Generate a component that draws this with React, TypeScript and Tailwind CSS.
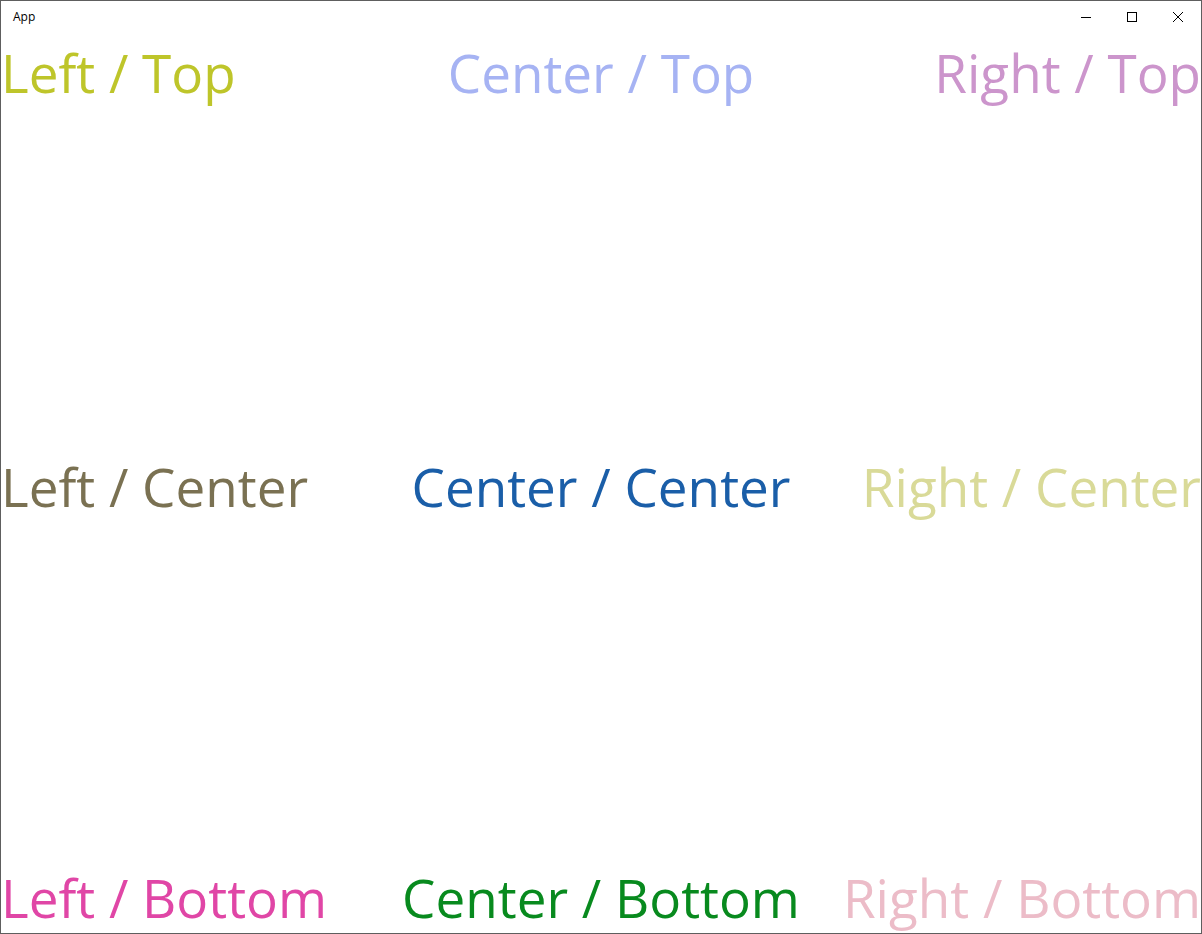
import React from 'react';

interface Cell {
  label: string;
  color: string;
  place: string;
}

const cells: Cell[] = [
  { label: 'Left / Top', color: 'text-[#bec52a]', place: 'justify-self-start self-start' },
  { label: 'Center / Top', color: 'text-[#a6b3f3]', place: 'justify-self-center self-start' },
  { label: 'Right / Top', color: 'text-[#cc95cc]', place: 'justify-self-end self-start' },
  { label: 'Left / Center', color: 'text-[#7a7152]', place: 'justify-self-start self-center mt-[7px]' },
  { label: 'Center / Center', color: 'text-[#1a5ea8]', place: 'justify-self-center self-center mt-[7px]' },
  { label: 'Right / Center', color: 'text-[#d9da98]', place: 'justify-self-end self-center mt-[7px]' },
  { label: 'Left / Bottom', color: 'text-[#e046a6]', place: 'justify-self-start self-end mb-[-4px]' },
  { label: 'Center / Bottom', color: 'text-[#088a1e]', place: 'justify-self-center self-end mb-[-4px]' },
  { label: 'Right / Bottom', color: 'text-[#ecbcc8]', place: 'justify-self-end self-end mb-[-4px]' },
];

function TitleBar() {
  return (
    <div className="flex h-8 items-center justify-between bg-white">
      <span className="pl-3 text-xs text-black">App</span>
      <div className="flex h-full">
        <button className="flex h-full w-[46px] items-center justify-center">
          <svg width="10" height="10" viewBox="0 0 10 10">
            <path d="M0 5.5h10" stroke="#000" strokeWidth="1" />
          </svg>
        </button>
        <button className="flex h-full w-[46px] items-center justify-center">
          <svg width="10" height="10" viewBox="0 0 10 10">
            <rect x="0.5" y="0.5" width="9" height="9" fill="none" stroke="#000" strokeWidth="1" />
          </svg>
        </button>
        <button className="flex h-full w-[46px] items-center justify-center">
          <svg width="10" height="10" viewBox="0 0 10 10">
            <path d="M0 0L10 10M10 0L0 10" stroke="#000" strokeWidth="1" />
          </svg>
        </button>
      </div>
    </div>
  );
}

export default function App() {
  return (
    <div className="flex h-[934px] w-[1202px] flex-col overflow-hidden border border-[#5e5e5e] bg-white font-['Open_Sans','Noto_Sans',sans-serif]">
      <TitleBar />
      <div className="grid flex-1 grid-cols-3 grid-rows-3 overflow-hidden">
        {cells.map((cell) => (
          <div
            key={cell.label}
            className={`whitespace-nowrap text-[53px] leading-[79px] ${cell.color} ${cell.place}`}
          >
            {cell.label}
          </div>
        ))}
      </div>
    </div>
  );
}
